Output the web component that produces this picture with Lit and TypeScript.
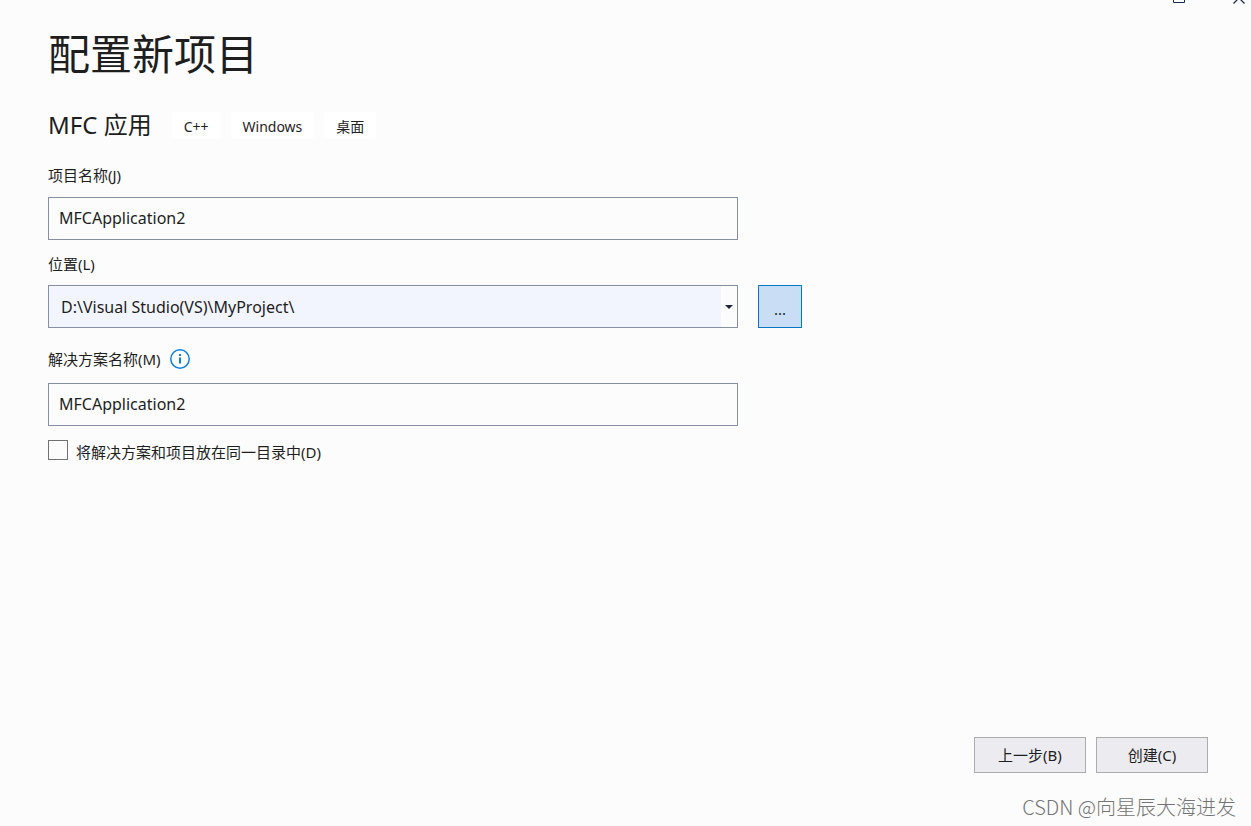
import { LitElement, html, css } from "lit";
import { customElement, state } from "lit/decorators.js";

@customElement("app-root")
export class AppRoot extends LitElement {
  @state() private projectName = "MFCApplication2";
  @state() private location = "D:\\Visual Studio(VS)\\MyProject\\";
  @state() private solutionName = "MFCApplication2";

  private tags = ["C++", "Windows", "桌面"];

  static styles = css`
    :host {
      display: flex;
      flex-direction: column;
      position: relative;
      box-sizing: border-box;
      min-height: 100vh;
      padding: 22px 43px 4px 48px;
      background: #fcfcfc;
      color: #1e1e1e;
      font: 15px/20px "Noto Sans", "Noto Sans CJK SC", sans-serif;
      overflow: hidden;
    }
    * {
      box-sizing: border-box;
    }
    h1,
    h2 {
      margin: 0;
      font-weight: 400;
    }
    h1 {
      font-family: "Noto Sans CJK SC", sans-serif;
      font-size: 42px;
      line-height: 60px;
    }
    h2 {
      font-size: 24px;
      line-height: 32px;
    }
    .window {
      position: absolute;
      top: 0;
      right: 0;
      display: flex;
      gap: 47px;
    }
    .window button {
      display: block;
      border: 0;
      padding: 0;
      background: none;
      height: 5px;
    }
    svg {
      display: block;
    }
    .kind {
      display: flex;
      align-items: center;
      gap: 20px;
      margin-top: 27px;
    }
    .tags {
      display: flex;
      gap: 10px;
      margin: 0;
      padding: 0;
      list-style: none;
    }
    .tags li {
      padding: 5px 12px 3px;
      border-radius: 4px;
      background: #fff;
      font-size: 14px;
      line-height: 19px;
    }
    form {
      display: flex;
      flex-direction: column;
      flex: 1;
    }
    .fields {
      display: grid;
      grid-template-columns: minmax(0, 690px) 44px;
      column-gap: 20px;
      margin-top: 24px;
    }
    .caption {
      grid-column: 1 / -1;
      display: flex;
      align-items: center;
      gap: 9px;
      margin-bottom: 12px;
    }
    .caption.spaced {
      margin: 14px 0 11px;
    }
    .caption.info {
      margin: 21px 0 14px;
    }
    input {
      font: inherit;
      color: inherit;
    }
    .box {
      grid-column: 1;
      width: 100%;
      height: 43px;
      border: 1px solid #868fa6;
      border-radius: 0;
      background: #fcfcfc;
      font-size: 16px;
    }
    input.box {
      padding: 0 10px 2px;
    }
    .combo {
      display: flex;
    }
    .combo input {
      flex: 1;
      min-width: 0;
      border: 0;
      padding: 0 12px;
      background: #f2f5fd;
    }
    .combo button {
      display: flex;
      align-items: center;
      justify-content: center;
      width: 16px;
      padding: 0;
      border: 0;
      background: #fcfcfc;
    }
    input:focus,
    button:focus {
      outline: 1px solid #007acc;
    }
    .browse {
      padding: 4px 0 0;
      border: 1px solid #0078c8;
      background: #c9def5;
      color: #1e1e1e;
      font: inherit;
    }
    .same {
      display: flex;
      align-items: flex-start;
      gap: 8px;
      margin-top: 14px;
    }
    .same input {
      appearance: none;
      width: 20px;
      height: 20px;
      margin: 0;
      border: 1px solid #717171;
      background: #fcfcfc;
    }
    .same input:checked {
      background: #007acc;
    }
    .same label {
      padding-top: 2px;
    }
    .actions {
      display: flex;
      justify-content: flex-end;
      gap: 10px;
      margin-top: auto;
      padding-top: 24px;
    }
    .actions button {
      width: 112px;
      height: 36px;
      padding: 0;
      border: 1px solid #acacb0;
      background: #ececf0;
      color: #1e1e1e;
      font: inherit;
    }
    footer {
      align-self: flex-end;
      margin: 19px -28px 0 0;
      color: #747474;
      font-family: "Noto Sans CJK SC", sans-serif;
      font-size: 20px;
      line-height: 30px;
      font-weight: 300;
    }
  `;

  render() {
    return html`
      <div class="window">
        <button type="button" aria-label="最大化">
          <svg width="14" height="5" fill="none" stroke="#1b2a48" stroke-width="1">
            <path d="M1.5 0V2.5H12.5V0" />
          </svg>
        </button>
        <button type="button" aria-label="关闭">
          <svg width="18" height="5" fill="none" stroke="#1b2a48" stroke-width="1.3">
            <path d="M0.5 3.5L6 -2L11.5 3.5" />
          </svg>
        </button>
      </div>
      <h1>配置新项目</h1>
      <div class="kind">
        <h2>MFC 应用</h2>
        <ul class="tags">
          ${this.tags.map((t) => html`<li>${t}</li>`)}
        </ul>
      </div>
      <form @submit=${(e: Event) => e.preventDefault()}>
        <div class="fields">
          <div class="caption"><label for="project">项目名称(J)</label></div>
          <input class="box" id="project" type="text" .value=${this.projectName}
            @input=${(e: Event) => (this.projectName = (e.target as HTMLInputElement).value)} />
          <div class="caption spaced"><label for="location">位置(L)</label></div>
          <div class="box combo">
            <input id="location" type="text" .value=${this.location}
              @input=${(e: Event) => (this.location = (e.target as HTMLInputElement).value)} />
            <button type="button" aria-label="位置列表">
              <svg width="8" height="4"><path d="M0 0H8L4 4Z" fill="#1b2438" /></svg>
            </button>
          </div>
          <button class="browse" type="button" aria-label="浏览">...</button>
          <div class="caption info">
            <label for="solution">解决方案名称(M)</label>
            <svg width="20" height="20" viewBox="0 0 20 20" fill="none" stroke="#0f7fd8">
              <circle cx="10" cy="10" r="9.2" stroke-width="1.5" />
              <path d="M10 8.5V14.5M10 5V7" stroke-width="2" />
            </svg>
          </div>
          <input class="box" id="solution" type="text" .value=${this.solutionName}
            @input=${(e: Event) => (this.solutionName = (e.target as HTMLInputElement).value)} />
        </div>
        <div class="same">
          <input id="same" type="checkbox" />
          <label for="same">将解决方案和项目放在同一目录中(D)</label>
        </div>
        <div class="actions">
          <button type="button">上一步(B)</button>
          <button type="submit">创建(C)</button>
        </div>
      </form>
      <footer>CSDN @向星辰大海进发</footer>
    `;
  }
}
